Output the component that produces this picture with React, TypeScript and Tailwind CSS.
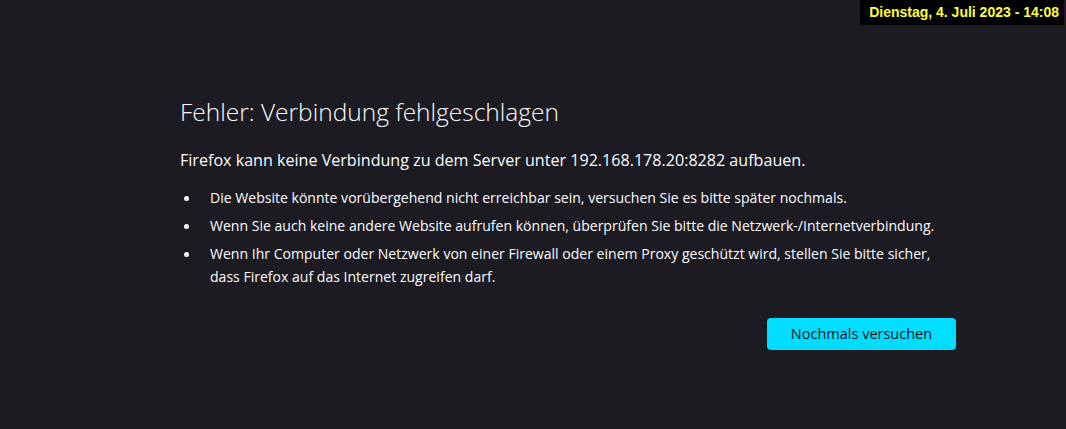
export default function App() {
  const font = { fontFamily: '"Open Sans", "Noto Sans", sans-serif' };
  const items = [
    "Die Website könnte vorübergehend nicht erreichbar sein, versuchen Sie es bitte später nochmals.",
    "Wenn Sie auch keine andere Website aufrufen können, überprüfen Sie bitte die Netzwerk-/Internetverbindung.",
    "Wenn Ihr Computer oder Netzwerk von einer Firewall oder einem Proxy geschützt wird, stellen Sie bitte sicher, dass Firefox auf das Internet zugreifen darf.",
  ];
  return (
    <div className="w-[1066px] h-[429px] bg-[#1c1b22] text-[#fbfbfe] relative overflow-hidden" style={font}>
      <div className="absolute top-0 right-[2px] bg-black pl-[9px] pr-[5px] h-[25px] flex items-center text-[#ffff33] font-bold text-[14px]" style={{ fontFamily: '"Liberation Sans", Arial, sans-serif' }}>
        Dienstag, 4. Juli 2023 - 14:08
      </div>
      <div className="pl-[180px] pt-[94px] w-[956px]">
        <h1 className="text-[24.5px] font-light leading-[36px]">Fehler: Verbindung fehlgeschlagen</h1>
        <p className="mt-[18px] text-[16.1px] leading-[24px]">Firefox kann keine Verbindung zu dem Server unter 192.168.178.20:8282 aufbauen.</p>
        <ul className="mt-[15px] text-[14.05px] leading-[22.5px] flex flex-col gap-[5.5px]">
          {items.map((t) => (
            <li key={t} className="flex">
              <span className="w-[30px] shrink-0 flex justify-start pl-[4px] pt-[9px]">
                <span className="w-[5px] h-[5px] rounded-full bg-[#fbfbfe]" />
              </span>
              <span>{t}</span>
            </li>
          ))}
        </ul>
        <div className="flex justify-end mt-[30px]">
          <button className="bg-[#00ddff] text-[#15141a] rounded-[4px] w-[189px] h-[32px] text-[14.5px] font-medium">Nochmals versuchen</button>
        </div>
      </div>
    </div>
  );
}
